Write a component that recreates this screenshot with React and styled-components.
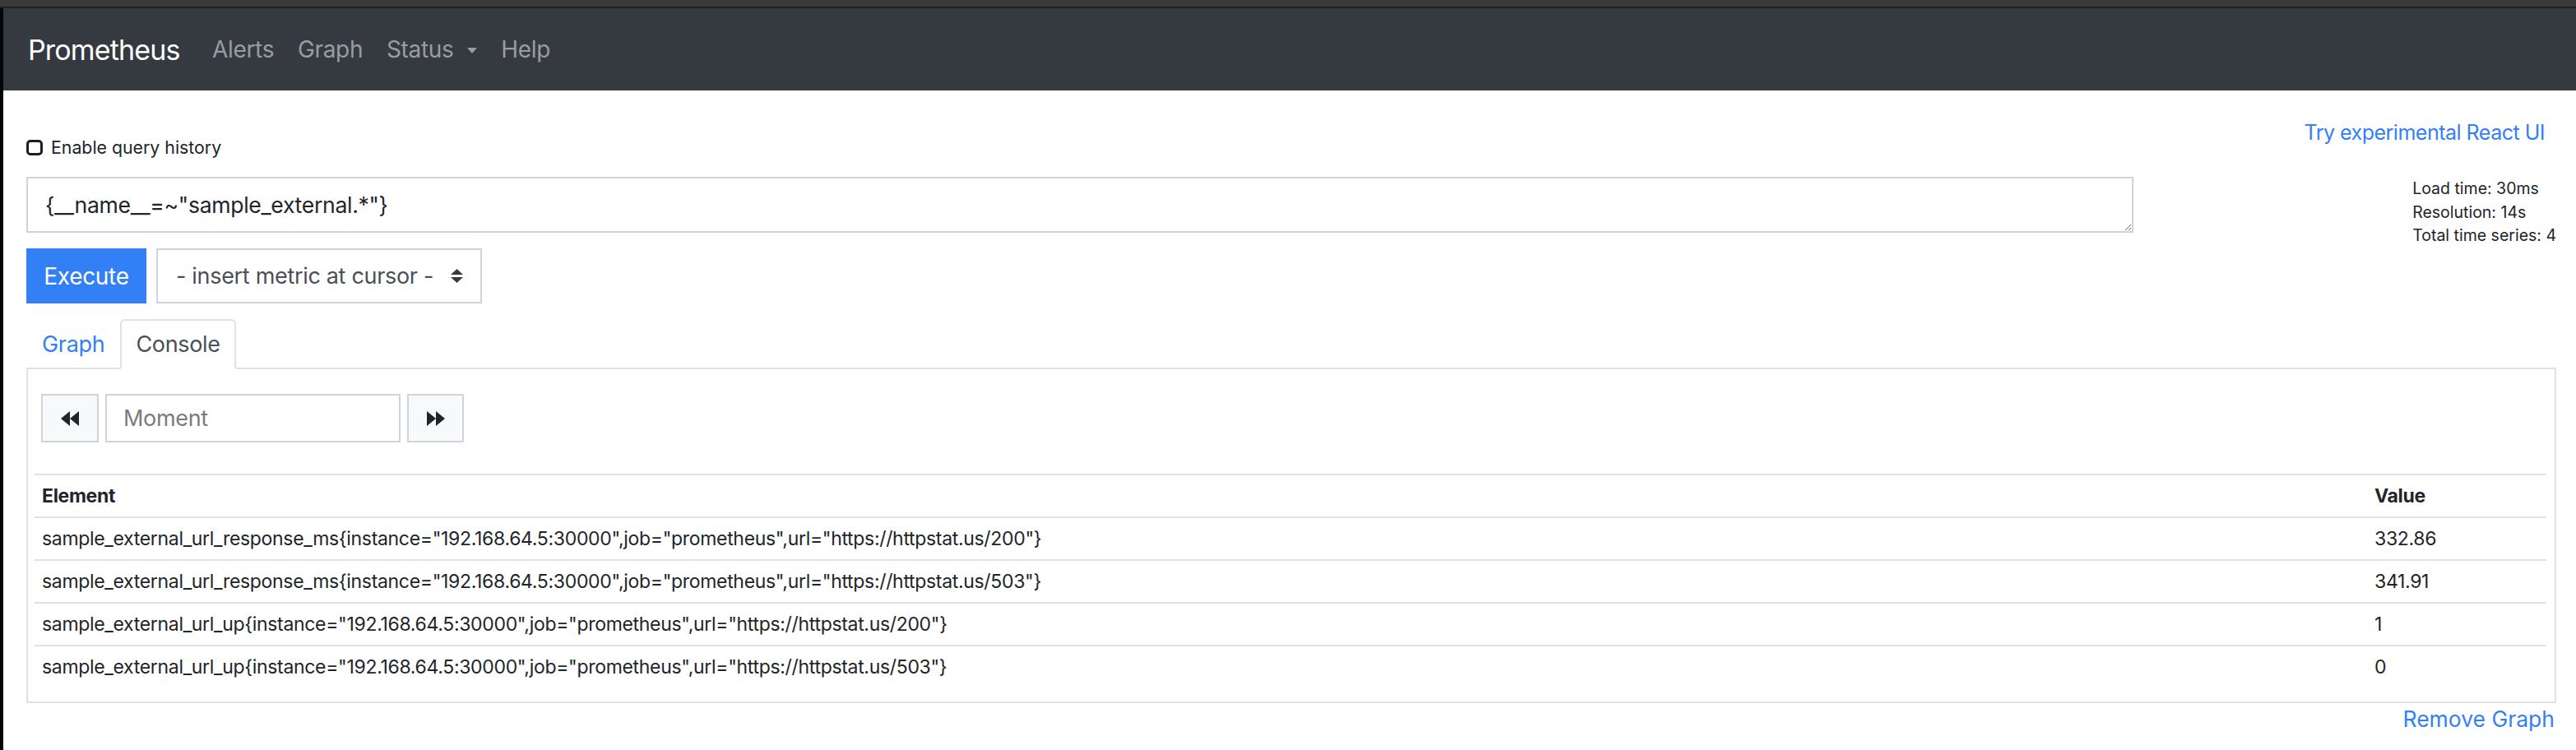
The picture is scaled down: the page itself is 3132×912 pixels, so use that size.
import React from 'react';
import styled, { createGlobalStyle } from 'styled-components';

const BLUE = '#3380f6';
const FONT = 'Inter, "Noto Sans", "Liberation Sans", sans-serif';

const Global = createGlobalStyle`
  html, body { margin: 0; padding: 0; background: #000; }
  body {
    font-family: ${FONT};
    color: #212529;
    letter-spacing: -0.02em;
    -webkit-font-smoothing: antialiased;
  }
  * { box-sizing: border-box; }
`;

const Chrome = styled.div`
  height: 10px;
  background: #3a3a3c;
  border-bottom: 2px solid #1f1f20;
`;

const Frame = styled.div`
  display: flex;
  min-height: 902px;
`;

const Edge = styled.div`
  width: 4px;
  flex: none;
  background: #050505;
`;

const Page = styled.div`
  flex: 1;
  background: #fff;
  min-width: 0;
`;

const Navbar = styled.nav`
  height: 100px;
  background: #343a40;
  display: flex;
  align-items: center;
  padding-left: 30px;
`;

const Brand = styled.a`
  font-size: 34px;
  letter-spacing: -0.025em;
  color: #fff;
  margin-right: 25px;
`;

const NavLink = styled.a`
  font-size: 28px;
  color: #9a9da0;
  padding: 0 14.4px;
  display: flex;
  align-items: center;
`;

const Caret = styled.span`
  display: inline-block;
  margin-left: 17px;
  margin-top: 2px;
  border-top: 7px solid #9a9da0;
  border-left: 6.5px solid transparent;
  border-right: 6.5px solid transparent;
`;

const Content = styled.div`
  padding: 0 24px 0 28px;
`;

const TopRow = styled.div`
  display: flex;
  justify-content: space-between;
  align-items: flex-start;
  padding-top: 33px;
`;

const CheckLabel = styled.label`
  margin-top: 21px;
  display: flex;
  align-items: center;
  gap: 10px;
  font-size: 21.3px;
  line-height: 30px;
  letter-spacing: 0;
`;

const CheckBox = styled.span`
  width: 20px;
  height: 19px;
  border: 3px solid #1e1e1e;
  border-radius: 5px;
  background: #fff;
`;

const Link = styled.a`
  color: ${BLUE};
  font-size: ${p => p.$size || 25}px;
  letter-spacing: ${p => p.$spacing || '-0.02em'};
  line-height: 36px;
  margin-right: ${p => p.$right || 0}px;
`;

const QueryGrid = styled.div`
  display: grid;
  grid-template-columns: 2562px 1fr;
  margin-top: 21px;
`;

const MainCol = styled.div`
  display: flex;
  flex-direction: column;
`;

const QueryInput = styled.textarea`
  width: 100%;
  height: 68px;
  border: 2px solid #ced4da;
  border-radius: 0;
  padding: 14px 21px;
  font-family: ${FONT};
  font-size: 26.6px;
  letter-spacing: inherit;
  line-height: 36px;
  color: #212529;
  resize: both;
  outline: none;
`;

const Stats = styled.div`
  justify-self: end;
  font-size: 19.5px;
  line-height: 28.5px;
  letter-spacing: 0;
  color: #212529;
`;

const ActionRow = styled.div`
  display: flex;
  gap: 12px;
  margin-top: 19px;
`;

const Execute = styled.button`
  width: 146px;
  height: 67px;
  background: ${BLUE};
  color: #fff;
  border: none;
  font-family: ${FONT};
  font-size: 28px;
  letter-spacing: inherit;
`;

const Select = styled.div`
  width: 396px;
  height: 67px;
  border: 2px solid #ced4da;
  display: flex;
  align-items: center;
  justify-content: space-between;
  padding: 0 21px 0 22px;
  font-size: 27px;
  white-space: nowrap;
  color: #495057;
`;

const Tabs = styled.div`
  display: flex;
  margin-top: 19px;
  border-bottom: 2px solid #dee2e6;
`;

const Tab = styled.a`
  height: 61px;
  margin-bottom: -2px;
  padding: 0 17px;
  display: flex;
  align-items: center;
  font-size: 27px;
  border: 2px solid ${p => (p.$active ? '#dee2e6' : 'transparent')};
  border-bottom-color: ${p => (p.$active ? '#fff' : 'transparent')};
  border-radius: 6px 6px 0 0;
  background: ${p => (p.$active ? '#fff' : 'transparent')};
  color: ${p => (p.$active ? '#495057' : BLUE)};
`;

const Panel = styled.div`
  border: 2px solid #dee2e6;
  border-top: none;
  padding: 30px 10px 17px 8px;
`;

const Controls = styled.div`
  display: flex;
  gap: 8px;
  margin-left: 8px;
  height: 59px;
`;

const StepButton = styled.button`
  width: ${p => p.$w}px;
  height: 59px;
  background: #f8f9fa;
  border: 2px solid #ced4da;
  display: flex;
  align-items: center;
  justify-content: center;
  padding: 0;
`;

const Moment = styled.input`
  width: 359px;
  height: 59px;
  border: 2px solid #ced4da;
  padding: 0 20px;
  font-family: ${FONT};
  font-size: 27px;
  letter-spacing: inherit;
  color: #495057;
  outline: none;
  &::placeholder { color: #7b7b7b; }
`;

const Table = styled.table`
  width: 100%;
  margin-top: 38px;
  border-collapse: collapse;
  font-size: 23px;
  line-height: 34px;
`;

const Cell = styled.td`
  padding: 8px 9px;
  border-top: 2px solid #dee2e6;
  text-align: left;
  vertical-align: top;
  font-weight: ${p => (p.$head ? 700 : 400)};
  width: ${p => (p.$value ? '218px' : 'auto')};
  color: #212529;
`;

const Footer = styled.div`
  display: flex;
  justify-content: flex-end;
  padding: 1px 2px 0 0;
`;

const Backward = () => (
  <svg width="22" height="18" viewBox="0 0 22 18">
    <polygon points="11,0 0,9 11,18" fill="#212529" />
    <polygon points="22,0 11,9 22,18" fill="#212529" />
  </svg>
);

const Forward = () => (
  <svg width="22" height="18" viewBox="0 0 22 18">
    <polygon points="0,0 11,9 0,18" fill="#212529" />
    <polygon points="11,0 22,9 11,18" fill="#212529" />
  </svg>
);

const UpDown = () => (
  <svg width="15" height="17" viewBox="0 0 15 17">
    <polygon points="7.5,0 15,7 0,7" fill="#343a40" />
    <polygon points="0,10 15,10 7.5,17" fill="#343a40" />
  </svg>
);

const rows = [
  ['sample_external_url_response_ms{instance="192.168.64.5:30000",job="prometheus",url="https://httpstat.us/200"}', '332.86'],
  ['sample_external_url_response_ms{instance="192.168.64.5:30000",job="prometheus",url="https://httpstat.us/503"}', '341.91'],
  ['sample_external_url_up{instance="192.168.64.5:30000",job="prometheus",url="https://httpstat.us/200"}', '1'],
  ['sample_external_url_up{instance="192.168.64.5:30000",job="prometheus",url="https://httpstat.us/503"}', '0'],
];

export default function App() {
  return (
    <>
      <Global />
      <Chrome />
      <Frame>
        <Edge />
        <Page>
          <Navbar>
            <Brand>Prometheus</Brand>
            <NavLink>Alerts</NavLink>
            <NavLink>Graph</NavLink>
            <NavLink>
              Status
              <Caret />
            </NavLink>
            <NavLink>Help</NavLink>
          </Navbar>
          <Content>
            <TopRow>
              <CheckLabel>
                <CheckBox />
                Enable query history
              </CheckLabel>
              <Link $right={14}>Try experimental React UI</Link>
            </TopRow>
            <QueryGrid>
              <MainCol>
                <QueryInput defaultValue={'{__name__=~"sample_external.*"}'} spellCheck={false} />
                <ActionRow>
                  <Execute>Execute</Execute>
                  <Select>
                    <span>- insert metric at cursor -</span>
                    <UpDown />
                  </Select>
                </ActionRow>
              </MainCol>
              <Stats>
                <div>Load time: 30ms</div>
                <div>Resolution: 14s</div>
                <div>Total time series: 4</div>
              </Stats>
            </QueryGrid>
            <Tabs>
              <Tab>Graph</Tab>
              <Tab $active>Console</Tab>
            </Tabs>
            <Panel>
              <Controls>
                <StepButton $w={70}><Backward /></StepButton>
                <Moment placeholder="Moment" />
                <StepButton $w={69}><Forward /></StepButton>
              </Controls>
              <Table>
                <thead>
                  <tr>
                    <Cell as="th" $head>Element</Cell>
                    <Cell as="th" $head $value>Value</Cell>
                  </tr>
                </thead>
                <tbody>
                  {rows.map(([el, v]) => (
                    <tr key={el}>
                      <Cell>{el}</Cell>
                      <Cell $value>{v}</Cell>
                    </tr>
                  ))}
                </tbody>
              </Table>
            </Panel>
            <Footer>
              <Link $size={26.5} $spacing="0">Remove Graph</Link>
            </Footer>
          </Content>
        </Page>
      </Frame>
    </>
  );
}
